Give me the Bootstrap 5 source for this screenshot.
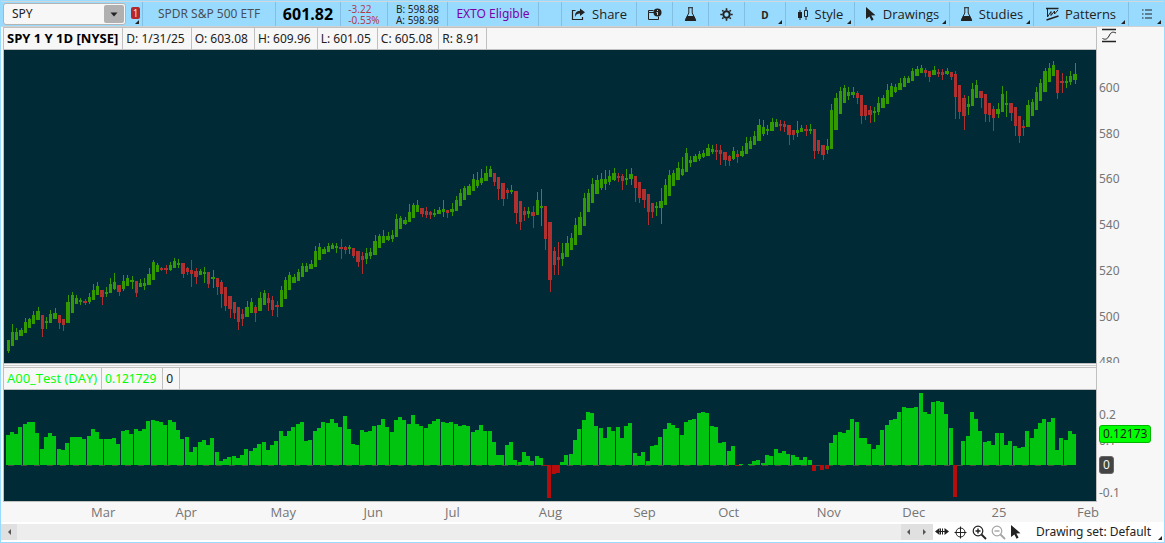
<!DOCTYPE html>
<html lang="en">
<head>
<meta charset="utf-8">
<meta name="viewport" content="width=device-width, initial-scale=1">
<title>SPY chart</title>
<link href="https://cdn.jsdelivr.net/npm/bootstrap@5.3.0/dist/css/bootstrap.min.css" rel="stylesheet">
<style>
  :root { --sky: #99dbff; --line: #c0c0c0; --panel: #f7f7f7; --plot: #002b36; --axis-w: 67px; }
  body { font-family: "Noto Sans", "Open Sans", sans-serif; font-size: 12px; line-height: 16px; color: #222; background: var(--panel); }
  .app-frame { border: 1px solid var(--sky); }
  button, input { font: inherit; color: inherit; }
  .bar-top { background: var(--sky); height: 26px; border-top: 1px solid #d0d8dc; border-bottom: 1px solid #d0d0d0; }
  .cell { position: relative; border: 0; border-left: 1px solid #83bfe2; background: none; padding: 0; display: flex; align-items: center; justify-content: center; gap: 6px; white-space: nowrap; flex: none; }
  .cell-text { font-family: "Open Sans", "Noto Sans", sans-serif; font-size: 13px; }
  .w-s { width: 36px; } .w-name { width: 133px; } .w-last { width: 65px; } .w-chg { width: 47px; } .w-ba { width: 60px; }
  .w-exto { width: 91px; } .w-share { width: 75px; } .w-agg { width: 41px; } .w-style { width: 69px; } .w-draw { width: 95px; } .w-stud { width: 84px; }
  .corner::after { content: ""; position: absolute; right: 3px; bottom: 2px; border: 2px solid transparent; border-right-color: #222; border-bottom-color: #222; }
  .sym-block { width: 141px; padding: 1px 2px; gap: 5px; }
  .sym-box { width: 123px; height: 22px; background: var(--panel); border: 1px solid #b4b4b4; border-radius: 3px; padding: 1px; }
  .sym-box input { border: 0; background: none; padding: 0 0 0 7px; min-width: 0; outline: 0; }
  .sym-box button { flex: none; width: 20px; border: 0; border-radius: 2px; background: #b0b0b0; padding: 0; }
  .link-no { position: relative; width: 9px; height: 20px; border: 0; background: none; padding: 0; display: flex; align-items: flex-start; }
  .link-no span { background: #b3282d; color: #f3dcdc; width: 9px; height: 12px; margin-top: 3px; border-radius: 2px; font-size: 10px; line-height: 12px; text-align: center; }
  .link-no::after { right: 1px; bottom: 0; }
  .last-price { font-size: 16px; font-weight: 700; color: #000; }
  .tiny { font-size: 10px; line-height: 11px; padding-top: 2px; }
  .name-text { color: #4a4f55; } .down-text { color: #b23a4c; } .exto-text { color: #7a00a8; }
  .info-row { height: 21px; border-top: 1px solid var(--line); box-sizing: content-box; }
  .info-row span { border-right: 1px solid var(--line); padding: 3px 6px 0 3px; white-space: nowrap; }
  .info-row .info-title { font-family: "Open Sans", "Noto Sans", sans-serif; font-size: 13px; padding-right: 4px; padding-top: 2px; }
  .study-text { color: #0f0; }
  .chart-col { border-left: 1px solid var(--line); border-right: 1px solid var(--line); margin-left: 2px; }
  .plot-box { background: var(--plot); border-top: 1px solid var(--line); border-bottom: 1px solid var(--line); box-sizing: content-box; overflow: hidden; }
  .plot-box svg { display: block; width: 100%; height: 100%; }
  .price-h { flex: 313 1 0; } .study-h { flex: 111 1 0; }
  .splitter { height: 3px; border-bottom: 1px solid var(--panel); border-top: 1px solid var(--panel); background: #cfcfcf; }
  .axis-col { width: var(--axis-w); }
  .scale { position: relative; box-sizing: content-box; border-top: 1px solid transparent; border-bottom: 1px solid transparent; overflow: hidden; color: #757575; }
  .scale .tick, .scale .tag { position: absolute; left: 2px; transform: translateY(-50%); }
  .scale .tag { border: 1px solid #00b400; border-radius: 3px; background: #0f0; color: #222; padding: 0 3px; line-height: 16px; }
  .scale .tag-zero { background: #444; border-color: #666; color: #f4f4f4; }
  .info-space { height: 22px; }
  .time-axis { height: 20px; }
  .time-row { position: relative; margin-left: 3px; margin-right: var(--axis-w); color: #757575; font-family: "Open Sans", "Noto Sans", sans-serif; font-size: 13px; }
  .time-row span { position: absolute; top: 2px; transform: translateX(-50%); }
  .bar-bottom { background: #fff; height: 20px; }
  .scroll-track { background: #ededed; height: 16px; }
  .scroll-track button { width: 16px; border: 0; padding: 0; background: #e0e0e0; display: flex; align-items: center; justify-content: center; }
  .tools { gap: 4px; padding: 0 14px 0 2px; }
  .tools button, .plain { border: 0; background: none; padding: 0; line-height: 0; }
  .set-btn { position: relative; border: 0; background: none; padding: 0 13px 0 0; white-space: nowrap; }
  .set-btn::after { right: 2px; bottom: 0; }
</style>
<script src="https://cdn.jsdelivr.net/npm/bootstrap@5.3.0/dist/js/bootstrap.bundle.min.js"></script>
</head>
<body>
<div class="app-frame vh-100 d-flex flex-column">
  <header class="bar-top d-flex">
    <div class="sym-block d-flex align-items-center">
      <div class="sym-box d-flex">
        <input class="flex-grow-1" type="text" value="SPY" aria-label="Symbol">
        <button type="button" aria-label="Recent symbols"><svg width="8" height="5" class="d-block mx-auto"><path d="M0.500 .5h7L4 4.500z" fill="#222"/></svg></button>
      </div>
      <button class="link-no corner" type="button" aria-label="Link group"><span>1</span></button>
    </div>
    <div class="cell w-name name-text">SPDR S&amp;P 500 ETF</div>
    <div class="cell w-last last-price">601.82</div>
    <div class="cell w-chg tiny down-text"><div>-3.22<br>-0.53%</div></div>
    <div class="cell w-ba tiny"><div>B: 598.88<br>A: 598.98</div></div>
    <div class="cell w-exto exto-text">EXTO Eligible</div>
    <div class="cell flex-grow-1"></div>
    <button class="cell w-share cell-text" type="button">
      <svg width="15" height="13" viewBox="0 0 15 13"><path d="M4.500 2.500h-3v9h10V9" fill="none" stroke="#222" stroke-width="1.200"/><path d="M9 0.500l5 3.700-5 3.700V5.600C6.500 5.600 5 6.500 4 9 3.700 5 5.500 2.800 9 2.700z" fill="#222"/></svg>Share</button>
    <button class="cell w-s" type="button" aria-label="Event alerts">
      <svg width="15" height="13" viewBox="0 0 15 13"><path d="M7 4.500H1.500v7h10V8.500M1.500 4.500v-2h5" fill="none" stroke="#222"/><circle cx="10.500" cy="4.500" r="4" fill="#222"/><path d="M10.500 2v1M10.500 4v3M9.500 4.500h1" stroke="#99dbff"/></svg></button>
    <button class="cell w-s" type="button" aria-label="Quick studies">
      <svg width="13" height="15" viewBox="0 0 13 15"><path d="M4 .7h5M4.800 1v5L1.500 12.500h10L8.200 6V1" fill="none" stroke="#222"/><path d="M3.200 9h6.600l2.500 5H.7z" fill="#222"/></svg></button>
    <button class="cell w-s" type="button" aria-label="Settings">
      <svg width="13" height="13" viewBox="-6.500 -6.500 13 13"><circle r="3.200" fill="none" stroke="#222" stroke-width="2"/><path d="M0-6.200V-4M0 6.200V4M-6.200 0H-4M6.200 0H4M-4.300-4.300L-3-3M4.300 4.300L3 3M-4.300 4.300L-3 3M4.300-4.300L3-3" stroke="#222" stroke-width="1.600"/></svg></button>
    <button class="cell w-agg tiny fw-bold corner" type="button">D</button>
    <button class="cell w-style cell-text corner" type="button">
      <svg width="12" height="14" viewBox="0 0 12 14"><path d="M3 3v10M9 0v3M9 9v4" stroke="#222"/><path d="M1 5h4v6H1z" fill="#222"/><path d="M7.500 3.500h3v6h-3z" fill="none" stroke="#222"/></svg>Style</button>
    <button class="cell w-draw cell-text corner" type="button">
      <svg width="12" height="14" viewBox="0 0 12 14"><path d="M1 0l9.500 8.300-4.200.3 2.300 4-2 1.100-2.200-4.200L1 12z" fill="#222"/></svg>Drawings</button>
    <button class="cell w-stud cell-text corner" type="button">
      <svg width="13" height="15" viewBox="0 0 13 15"><path d="M4 .7h5M4.800 1v5L1.500 12.500h10L8.200 6V1" fill="none" stroke="#222"/><path d="M3.200 9h6.600l2.500 5H.7z" fill="#222"/></svg>Studies</button>
    <button class="cell w-draw cell-text corner" type="button">
      <svg width="13" height="14" viewBox="0 0 13 14"><path d="M0 1.500h12.500M.5 13l12-4" fill="none" stroke="#222" stroke-width="1.400"/><path d="M1.500 2v8L5 4.500v4L8.500 4v3L12 3" fill="none" stroke="#222"/></svg>Patterns</button>
    <button class="cell w-s corner" type="button" aria-label="Menu">
      <svg width="10" height="10" viewBox="0 0 10 10"><path d="M0 1h1.500M0 5h1.500M0 9h1.500M3 1h7M3 5h7M3 9h7" stroke="#222" stroke-width="1.200"/></svg></button>
  </header>

  <main class="d-flex flex-grow-1">
    <div class="chart-col flex-grow-1 d-flex flex-column">
      <div class="info-row d-flex"><span class="info-title fw-bold text-black">SPY 1 Y 1D [NYSE]</span><span>D: 1/31/25</span><span>O: 603.08</span><span>H: 609.96</span><span>L: 601.05</span><span>C: 605.08</span><span>R: 8.91</span></div>
      <div class="plot-box price-h"><svg id="price" viewBox="0 0 1092 313" preserveAspectRatio="none"></svg></div>
      <div class="splitter"></div>
      <div class="info-row d-flex"><span class="info-title study-text">A00_Test (DAY)</span><span class="study-text">0.121729</span><span>0</span></div>
      <div class="plot-box study-h"><svg id="study" viewBox="0 0 1092 111" preserveAspectRatio="none"></svg></div>
    </div>
    <div class="axis-col d-flex flex-column">
      <div class="info-space ps-1"><button class="plain d-block" type="button" aria-label="Scale mode"><svg class="d-block" width="16" height="16" viewBox="0 0 16 16"><path d="M1 2.500h14M1 14.500h14" stroke="#222" stroke-width="1.600"/><path d="M1.500 11.500c3 1.500 5 .5 6.500-2.500s3-5 7-3" fill="none" stroke="#222"/></svg></button></div>
      <div class="scale price-h" id="priceScale"></div>
      <div class="splitter bg-transparent"></div>
      <div class="info-space"></div>
      <div class="scale study-h" id="studyScale"></div>
    </div>
  </main>

  <div class="time-axis"><div class="time-row" id="months"></div></div>

  <footer class="bar-bottom d-flex align-items-center">
    <div class="scroll-track flex-grow-1 d-flex">
      <button type="button" aria-label="Scroll to start"><svg width="3" height="6"><path d="M3 0v6L0 3z" fill="#555"/></svg></button>
      <div class="flex-grow-1"></div>
      <button type="button" aria-label="Scroll left"><svg width="3" height="6"><path d="M3 0v6L0 3z" fill="#555"/></svg></button>
      <button type="button" aria-label="Scroll right"><svg width="3" height="6"><path d="M0 0v6L3 3z" fill="#555"/></svg></button>
    </div>
    <div class="tools d-flex align-items-center">
      <button type="button" aria-label="Pan"><svg width="14" height="15" viewBox="0 0 14 15"><path d="M0 6.500L4.500 3v7zM14 6.500L9.500 3v7z" fill="#222"/><path d="M5.500 3.500v6M7.500 3.500v6" stroke="#222"/><path d="M4 6.500h6" stroke="#222"/></svg></button>
      <button type="button" aria-label="Crosshair"><svg width="15" height="15" viewBox="0 0 15 15"><circle cx="7.500" cy="7.500" r="4.500" fill="none" stroke="#222"/><path d="M7.500 1.500v12M1.500 7.500h12" stroke="#222"/></svg></button>
      <button type="button" aria-label="Zoom in"><svg width="15" height="15" viewBox="0 0 15 15"><circle cx="6" cy="6" r="4.800" fill="none" stroke="#222" stroke-width="1.200"/><path d="M9.500 9.500l4.500 4.500" stroke="#222" stroke-width="1.800"/><path d="M3.500 6h5M6 3.500v5" stroke="#222" stroke-width="1.400"/></svg></button>
      <button type="button" aria-label="Zoom out"><svg width="15" height="15" viewBox="0 0 15 15"><circle cx="6" cy="6" r="4.800" fill="none" stroke="#a5a5a5" stroke-width="1.200"/><path d="M9.500 9.500l4.500 4.500" stroke="#a5a5a5" stroke-width="1.800"/><path d="M3.500 6h5" stroke="#a5a5a5" stroke-width="1.400"/></svg></button>
      <button type="button" aria-label="Pointer"><svg width="12" height="14" viewBox="0 0 12 14"><path d="M1 0l9.500 8.300-4.200.3 2.300 4-2 1.100-2.200-4.200L1 12z" fill="#222"/></svg></button>
    </div>
    <button class="set-btn corner" type="button">Drawing set: Default</button>
  </footer>
</div>

<script>
// One entry per trading day: direction (G up, R down), high, body top, body bottom, low; depths below the top of the plot.
const days = `G290,290,301,303 G274,282,296,296 G278,282,290,290 G278,280,286,286 G268,272,283,283 G268,269,278,278 G261,265,274,274 G257,261,270,270 R265,265,279,287 G267,271,273,279
G260,264,273,273 G258,263,269,269 R265,265,273,279 R269,269,275,281 G245,252,273,273 G242,245,263,263 G245,248,254,254 G248,250,252,255 R249,251,253,255 G243,247,252,254
G234,240,250 G232,236,245 R240,240,247,255 G237,242,244,247 G228,234,243 G223,232,239,240 R235,235,242,246 G225,231,239,241 G225,228,236 G226,230,232,239
R231,231,243,247 G229,233,237 G228,233,236,240 G218,224,235 G210,212,230 G213,215,222 R217,218,220,221 R215,218,220,224 G212,215,220,221 G208,211,218
G209,213,215,218 R213,213,224,228 R217,218,222,225 R210,220,224,237 R218,221,227,234 G219,221,225 G217,222,224,233 R222,222,234,238 G220,227,229,238 R228,228,237,245
R230,232,244,258 R237,237,256,261 R246,246,259,268 R252,252,263,269 R257,257,272,280 R259,264,269,276 G251,257,267 G248,252,263 R255,257,263,272 G242,248,261
G240,243,255 R243,248,253,261 R246,250,260,266 R251,255,257,267 G236,240,257 G227,230,249 G222,225,240 G224,227,233 G219,222,231 G213,216,227
G213,216,222 G210,214,219 G196,201,217 G193,197,210 G197,199,204 G193,196,202 G193,195,199 G193,196,198,203 R189,197,199,209 R196,197,200,204
G195,197,199,204 R198,198,206,208 R201,201,212,217 R202,206,210,224 G198,203,209,214 G198,202,206,209 G185,191,205 G184,186,198 G180,186,193 G182,186,190,191
G180,185,189,192 G164,169,187 G166,168,179 G167,170,174,175 G154,162,172 G153,155,168 G150,155,162 R158,158,164,167 R157,161,165,168 R161,162,165,169
G159,163,165,167 G157,160,164 G150,159,162,167 R160,160,163,168 G153,159,162,166 G146,150,161 G139,143,156 G136,138,150 G134,136,145 G124,129,141
G122,130,136,138 G119,128,133,135 G116,123,131 G116,119,127 R123,123,132,136 R127,127,139,150 R133,133,149,156 R138,140,143,149 G135,140,142,144 R141,141,163,174
R151,151,172,180 R157,161,165,171 G157,161,164,168 R156,162,166,178 G142,150,165 G139,156,158,176 R156,156,189,200 R172,172,230,242 R197,201,215,225 R192,207,210,225
G193,203,209,216 G186,193,207 G183,188,200 G168,175,195 G162,167,185 G143,148,176 G139,143,162 G128,134,153 G125,130,144 G123,129,138,140
G120,129,134,140 G120,126,132,135 G118,123,130,131 R123,126,128,132 R124,126,131,140 G119,128,130,135 G118,124,129,135 R126,126,138,152 R132,132,148,153 R139,139,150,158
R144,144,162,175 R153,153,162,168 G152,156,158,166 G138,151,158,174 G129,135,155 G120,125,146 G120,123,136 G112,118,130 G107,119,125,126 G98,103,122
G106,110,113,117 G104,106,112 G101,104,109,111 G100,103,107,108 G94,98,106 G95,99,102,104 R94,100,102,110 R95,100,104,115 R102,102,110,116 R105,106,111,116
G97,101,109,110 R100,104,107,113 G96,101,106,107 G87,93,104 G87,91,99 G81,86,95 G69,75,91 G70,77,84,86 G75,79,81,85 G68,72,81
G69,72,77 R70,74,76,81 R71,74,77,82 R75,75,85,95 R80,80,85,90 G71,80,83,87 G75,78,82 R75,79,81,86 G74,79,81,84 R79,79,101,109
R90,90,101,104 R95,95,105,110 G89,96,100,104 G54,60,99 G43,48,80 G37,41,64 G35,38,53 G37,42,46,50 G37,42,45,48 R41,43,48,54
R45,45,66,74 R55,55,66,70 R56,60,65,73 G57,61,63,72 G47,53,62,65 G45,48,58 G34,40,54 G33,36,47 G34,37,42,43 G28,33,40
G26,28,37 G26,28,33 G18,21,31 G16,19,26 G15,18,23 R18,20,23,27 R21,21,27,32 G16,20,25 R19,22,24,27 R19,22,25,30
G18,21,24,25 R22,22,27,30 R21,24,47,69 R35,35,62,69 R45,48,66,80 G46,54,57,65 G33,39,56 G30,35,48 R41,41,48,58 R44,44,64,72
R53,53,65,72 R56,59,68,81 G53,59,64,68 G36,44,62 G41,53,55,67 R53,53,63,71 R57,57,76,86 R66,66,86,93 R70,76,78,86 G50,55,77
G49,52,66 G37,42,60 G29,33,51 G18,21,42 G13,18,32 G11,15,26 R20,20,43,49 R23,31,33,43 G26,31,33,38 G21,26,32,35
G13,24,30,34`.split(/\s+/);
const study = [30,33,31,38,41,43,43,32,16,28,32,29,16,15,22,28,28,28,26,29,36,33,26,26,26,27,21,34,35,31,36,34,36,44,45,44,43,40,45,43,35,26,28,13,18,23,25,20,27,13,
4,6,8,9,7,10,16,14,17,21,23,15,20,24,34,29,34,38,41,43,24,25,34,37,43,42,46,42,38,49,36,21,20,35,33,34,39,40,46,38,33,45,48,45,41,50,41,39,37,41,
44,46,43,42,43,41,39,40,39,33,35,40,34,34,23,10,10,20,23,5,3,13,9,4,9,7,-1,-33,-9,-8,3,10,11,25,36,45,53,52,39,37,27,38,34,38,27,39,42,12,9,13,
4,19,20,28,36,42,40,37,30,43,45,46,52,53,52,39,38,22,23,14,19,-1,1,0,1,4,5,2,10,9,16,12,14,11,10,8,5,8,5,-6,0,-5,-4,22,30,33,32,35,46,43,
27,27,21,16,20,35,40,45,46,53,58,57,57,58,72,53,51,63,64,63,51,37,-32,0,24,29,53,46,34,23,24,20,32,32,20,24,19,17,18,34,27,36,42,46,43,47,15,27,25,34,31];

const NS = 'http://www.w3.org/2000/svg';
const slot = i => Math.floor(2 + 4.267 * i);
function box(svg, x, y, w, h, fill) {
  const r = document.createElementNS(NS, 'rect');
  Object.entries({x, y, width: w, height: h, fill}).forEach(([k, v]) => r.setAttribute(k, v));
  svg.appendChild(r);
}
const price = document.getElementById('price');
days.forEach((d, i) => {
  const [hi, top, bottom, lo = bottom] = d.slice(1).split(',').map(Number);
  const fill = d[0] === 'G' ? '#339900' : '#b03030';
  const a = slot(i) + 1, b = slot(i + 1);
  box(price, Math.floor((a + b) / 2), hi, 1, lo - hi, fill);
  box(price, a, top, b - a, bottom - top, fill);
});
const hist = document.getElementById('study');
for (let x = 4; x < 1066; x += 13) box(hist, x, 75, 6, 1, '#4a4444');
study.forEach((v, i) => {
  if (v > 0) box(hist, slot(i), 75 - v, 4, v, '#00c410');
  if (v < 0) box(hist, slot(i), 75, 4, -v, '#b50d0d');
});

function label(parent, text, cls, side, pct) {
  const s = document.createElement('span');
  s.textContent = text; s.className = cls; s.style[side] = pct + '%';
  parent.appendChild(s);
}
const pScale = document.getElementById('priceScale'), sScale = document.getElementById('studyScale');
for (let p = 600; p >= 480; p -= 20) label(pScale, p, 'tick', 'top', (38 + (600 - p) * 2.285) / 3.13);
[['0.2', 25], ['0.1', 51], ['-0.1', 103]].forEach(([t, y]) => label(sScale, t, 'tick', 'top', y / 1.11));
label(sScale, '0.12173', 'tag', 'top', 44 / 1.11);
label(sScale, '0', 'tag tag-zero', 'top', 75 / 1.11);
const months = document.getElementById('months');
[['Mar', 99], ['Apr', 182], ['May', 279], ['Jun', 369], ['Jul', 448], ['Aug', 546], ['Sep', 640], ['Oct', 724], ['Nov', 824], ['Dec', 909], ['25', 994], ['Feb', 1083]]
  .forEach(([t, x]) => label(months, t, '', 'left', x / 10.92));
</script>
</body>
</html>
